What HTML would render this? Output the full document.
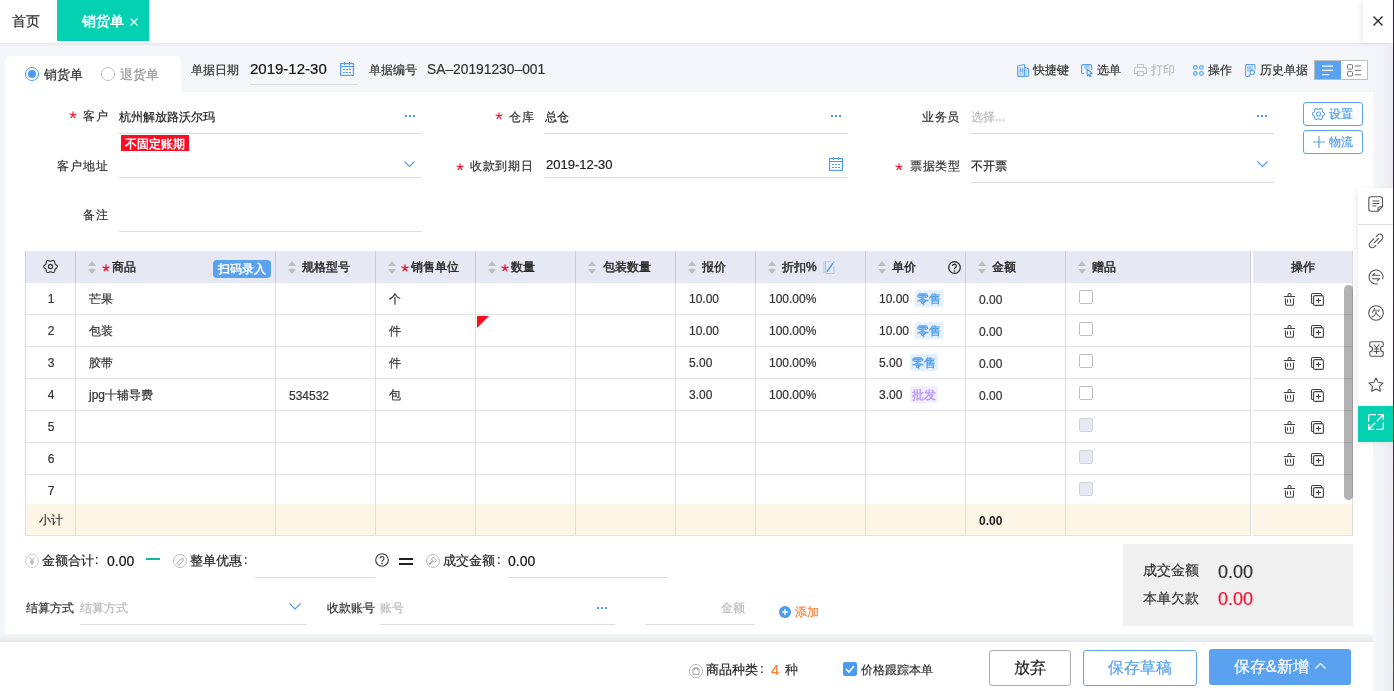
<!DOCTYPE html>
<html><head><meta charset="utf-8">
<style>
*{box-sizing:border-box;margin:0;padding:0}
html,body{width:1394px;height:691px;overflow:hidden;background:#f4f6fa}
body{font-family:"Liberation Sans",sans-serif;font-size:12px;color:#333;position:relative}
.a{-webkit-text-stroke:0.2px currentColor}
.b{-webkit-text-stroke:0}
.hd{-webkit-text-stroke:0.45px currentColor}
.a{position:absolute;white-space:nowrap}
.t12{font-size:12px;line-height:20px}
.t13{font-size:13px;line-height:20px}
.t14{font-size:14px;line-height:20px}
.ul{position:absolute;height:1px;background:#dcdcdc}
.red{color:#f5222d}
.vl{position:absolute;width:1px;background:#dedede}
.hl{position:absolute;height:1px;background:#e2e2e2}
svg{position:absolute;overflow:visible}
</style></head><body><div id="root" style="position:absolute;left:0;top:0;width:1394px;height:691px;overflow:hidden;will-change:transform">

<!-- top bar -->
<div class="a" style="left:0;top:0;width:1394px;height:43px;background:#fff"></div>
<div class="a" style="left:0;top:43px;width:1394px;height:4px;background:linear-gradient(#e6e7ea,#eceef1 40%,#f1f3f6 70%,#f4f6fa)"></div>
<div class="a t14" style="left:12px;top:11px;color:#333">首页</div>
<div class="a" style="left:57px;top:0;width:92px;height:41px;background:#03d1b1"></div>
<div class="a t14" style="left:82px;top:11px;color:#fff;font-weight:bold;-webkit-text-stroke:0">销货单</div>
<svg style="left:130px;top:18px" width="8" height="8"><path d="M0.5 0.5L7.5 7.5M7.5 0.5L0.5 7.5" stroke="#fff" stroke-width="1.2"/></svg>
<div class="a" style="left:1363px;top:0;width:31px;height:43px;background:#fff;box-shadow:-3px 0 5px rgba(0,0,0,0.06)"></div>
<svg style="left:1373px;top:16px" width="10" height="10"><path d="M0.5 0.5L9.5 9.5M9.5 0.5L0.5 9.5" stroke="#222" stroke-width="1.3"/></svg>

<!-- radio tab -->
<div class="a" style="left:5px;top:56px;width:176px;height:40px;background:#fff;border-radius:6px 6px 0 0"></div>
<div class="a" style="left:25px;top:67px;width:14px;height:14px;border:1px solid #4a9af0;border-radius:50%"></div>
<div class="a" style="left:28px;top:70px;width:8px;height:8px;background:#4a9af0;border-radius:50%"></div>
<div class="a" style="left:44px;top:65px;font-size:13px;line-height:20px;color:#333">销货单</div>
<div class="a" style="left:101px;top:67px;width:14px;height:14px;border:1px solid #bbb;border-radius:50%"></div>
<div class="a" style="left:120px;top:65px;font-size:13px;line-height:20px;color:#999">退货单</div>

<!-- toolbar strip -->
<div class="a t12" style="left:191px;top:60px;color:#333">单据日期</div>
<div class="a" style="left:250px;top:59px;font-size:15px;line-height:20px;color:#111">2019-12-30</div>
<div class="ul" style="left:250px;top:84px;width:108px"></div>
<svg style="left:340px;top:62px" width="14" height="14" viewBox="0 0 14 14"><g fill="none" stroke="#4a9af0" stroke-width="1.1"><rect x="0.6" y="1.6" width="12.8" height="11.8"/><path d="M0.6 4.5H13.4M4.5 0V3M9.5 0V3M3 7.5H5M6 7.5H8M9 7.5H11M3 10.5H5M6 10.5H8M9 10.5H11"/></g></svg>
<div class="a t12" style="left:369px;top:60px;color:#333">单据编号</div>
<div class="a" style="left:427px;top:60px;font-size:13.8px;line-height:20px;color:#333">SA–20191230–001</div>

<div class="a t12" style="left:1033px;top:60px;color:#333">快捷键</div>
<div class="a t12" style="left:1097px;top:60px;color:#333">选单</div>
<div class="a t12" style="left:1151px;top:60px;color:#bbb">打印</div>
<div class="a t12" style="left:1208px;top:60px;color:#333">操作</div>
<div class="a t12" style="left:1260px;top:60px;color:#333">历史单据</div>
<!-- toolbar icons -->
<svg style="left:1017px;top:64px" width="12" height="13" viewBox="0 0 12 13"><path d="M1 3V11.5H7.5V3Z" fill="#cfe3fb"/><g fill="none" stroke="#5aa2ef" stroke-width="1.1" stroke-linejoin="round"><path d="M0.6 2.6Q0.6 1.9 1.3 1.7L7.5 0.5V12.4H1.8A1.2 1.2 0 0 1 0.6 11.2Z"/><path d="M7.5 3.2L10.9 4.6A1 1 0 0 1 11.5 5.5V11.2A1.2 1.2 0 0 1 10.3 12.4H7.5"/><path d="M3.3 4.3V8.3M5.3 4.3V8.3M2.8 9.8H3.8M4.8 9.8H5.8M8.7 6H10M8.7 8H10M8.7 10H10"/></g></svg>
<svg style="left:1081px;top:64px" width="12" height="13" viewBox="0 0 12 13"><rect x="3" y="1" width="5.5" height="4.5" fill="#a8cdf5"/><g fill="none" stroke="#5aa2ef" stroke-width="1.2" stroke-linejoin="round"><path d="M3 9.4H2A1.4 1.4 0 0 1 .6 8V2A1.4 1.4 0 0 1 2 .6H9.2A1.4 1.4 0 0 1 10.6 2V6"/><path d="M6 5.2L11.2 9.2L9 9.8L10 12L8.9 12.5L7.9 10.4L6.3 11.8Z"/></g></svg>
<svg style="left:1134px;top:64px" width="13" height="12" viewBox="0 0 13 12"><g fill="none" stroke="#c4c4c4" stroke-width="1.1"><path d="M3.5 3.5V0.5H9.5V3.5M3 9.5H1.5A1 1 0 0 1 .5 8.5V4.5A1 1 0 0 1 1.5 3.5H11.5A1 1 0 0 1 12.5 4.5V8.5A1 1 0 0 1 11.5 9.5H10"/><rect x="3.5" y="7.5" width="6" height="4"/></g></svg>
<svg style="left:1193px;top:65px" width="11" height="11" viewBox="0 0 11 11"><g fill="none" stroke="#5aa2ef" stroke-width="1.2"><rect x="0.6" y="0.6" width="3.6" height="3.6" rx="1.8"/><rect x="6.6" y="0.6" width="3.6" height="3.6" rx="1.8"/><rect x="0.6" y="6.6" width="3.6" height="3.6" rx="1.8"/><rect x="6.6" y="6.6" width="3.6" height="3.6" rx="1.8"/></g></svg>
<svg style="left:1245px;top:64px" width="11" height="13" viewBox="0 0 11 13"><rect x="2" y="2" width="5.8" height="5.5" fill="#a8cdf5"/><g fill="none" stroke="#5aa2ef" stroke-width="1.1"><path d="M4.5 12.4H1.8A1.2 1.2 0 0 1 .6 11.2V1.8A1.2 1.2 0 0 1 1.8 .6H8.8A1.2 1.2 0 0 1 10 1.8V5.5"/><circle cx="7.2" cy="8.3" r="2.2"/><path d="M5.6 9.9L3.8 11.9"/></g></svg>
<div class="a" style="left:1314px;top:60px;width:54px;height:20px;border:1px solid #bdbdbd;background:#fff"></div>
<div class="a" style="left:1315px;top:61px;width:26px;height:18px;background:#5aa2ef"></div>
<svg style="left:1322px;top:65px" width="12" height="11"><path d="M0 1.1H11M0 5.4H11M0 9.7H7.3" stroke="#fff" stroke-width="1.1"/></svg>
<svg style="left:1347px;top:64px" width="15" height="13" viewBox="0 0 15 13"><g fill="none" stroke="#777" stroke-width="1"><rect x="0.5" y="0.6" width="5" height="4.6" rx="0.9"/><rect x="0.5" y="7.4" width="5" height="4.6" rx="0.9"/><path d="M7.8 2H14M7.8 6.4H14M7.8 10.8H14"/></g></svg>

<!-- main panel -->
<div class="a" style="left:5px;top:92px;width:1368px;height:542px;background:#fff"></div>
<div class="a" style="left:1373px;top:46px;width:20px;height:645px;background:linear-gradient(to right,#f4f6fa,#f1f3f6 60%,#e9ebef)"></div>


<!-- form row 1 -->
<svg style="left:69.0px;top:111.2px" width="8" height="8"><path d="M4 4L4.00 0.80M4 4L7.04 3.01M4 4L5.88 6.59M4 4L2.12 6.59M4 4L0.96 3.01" stroke="#ff0a24" stroke-width="1.15" stroke-linecap="round" fill="none"/></svg>
<div class="a t12" style="left:83px;top:106px;color:#333;letter-spacing:1px">客户</div>
<div class="a t12" style="left:119px;top:107px;color:#222">杭州解放路沃尔玛</div>
<div class="ul" style="left:119px;top:133px;width:303px"></div>
<svg style="left:405px;top:115px" width="11" height="3"><path d="M0 0h2v2h-2zM4 0h2v2h-2zM8 0h2v2h-2z" fill="#4a9af0"/></svg>
<div class="a" style="left:121px;top:135px;width:68px;height:16px;background:#fc0d26"></div>
<div class="a t12" style="left:125px;top:134px;color:#fff;font-weight:bold;-webkit-text-stroke:0">不固定账期</div>

<svg style="left:495.0px;top:112.0px" width="8" height="8"><path d="M4 4L4.00 0.80M4 4L7.04 3.01M4 4L5.88 6.59M4 4L2.12 6.59M4 4L0.96 3.01" stroke="#ff0a24" stroke-width="1.15" stroke-linecap="round" fill="none"/></svg>
<div class="a t12" style="left:509px;top:107px;color:#333;letter-spacing:0.5px">仓库</div>
<div class="a t12" style="left:545px;top:107px;color:#222">总仓</div>
<div class="ul" style="left:545px;top:133px;width:303px"></div>
<svg style="left:831px;top:115px" width="11" height="3"><path d="M0 0h2v2h-2zM4 0h2v2h-2zM8 0h2v2h-2z" fill="#4a9af0"/></svg>

<div class="a t12" style="left:922px;top:107px;color:#333;letter-spacing:0.5px">业务员</div>
<div class="a t12" style="left:971px;top:107px;color:#bbb">选择...</div>
<div class="ul" style="left:971px;top:133px;width:303px"></div>
<svg style="left:1257px;top:115px" width="11" height="3"><path d="M0 0h2v2h-2zM4 0h2v2h-2zM8 0h2v2h-2z" fill="#4a9af0"/></svg>

<div class="a" style="left:1303px;top:102px;width:60px;height:24px;border:1px solid #5aa2ef;border-radius:3px"></div>
<svg style="left:1312px;top:108px" width="13" height="12" viewBox="0 0 13 12"><g fill="none" stroke="#5aa2ef" stroke-width="1.1"><path d="M12.55 6.00L12.51 6.31L12.39 6.62L12.21 6.90L11.98 7.16L11.72 7.40L11.44 7.61L11.18 7.80L10.95 7.98L10.76 8.17L10.61 8.38L10.51 8.60L10.44 8.86L10.40 9.16L10.36 9.48L10.32 9.82L10.25 10.16L10.14 10.49L9.98 10.79L9.78 11.05L9.53 11.24L9.23 11.36L8.91 11.41L8.57 11.40L8.23 11.33L7.90 11.22L7.58 11.09L7.28 10.96L7.01 10.85L6.75 10.78L6.50 10.75L6.25 10.78L5.99 10.85L5.72 10.96L5.42 11.09L5.10 11.22L4.77 11.33L4.43 11.40L4.09 11.41L3.77 11.36L3.48 11.24L3.22 11.05L3.02 10.79L2.86 10.49L2.75 10.16L2.68 9.82L2.64 9.48L2.60 9.16L2.56 8.86L2.49 8.60L2.39 8.38L2.24 8.17L2.05 7.98L1.82 7.80L1.56 7.61L1.28 7.40L1.02 7.16L0.79 6.90L0.61 6.62L0.49 6.31L0.45 6.00L0.49 5.69L0.61 5.38L0.79 5.10L1.02 4.84L1.28 4.60L1.56 4.39L1.82 4.20L2.05 4.02L2.24 3.83L2.39 3.63L2.49 3.40L2.56 3.14L2.60 2.84L2.64 2.52L2.68 2.18L2.75 1.84L2.86 1.51L3.02 1.21L3.22 0.95L3.47 0.76L3.77 0.64L4.09 0.59L4.43 0.60L4.77 0.67L5.10 0.78L5.42 0.91L5.72 1.04L5.99 1.15L6.25 1.22L6.50 1.25L6.75 1.22L7.01 1.15L7.28 1.04L7.58 0.91L7.90 0.78L8.23 0.67L8.57 0.60L8.91 0.59L9.23 0.64L9.53 0.76L9.78 0.95L9.98 1.21L10.14 1.51L10.25 1.84L10.32 2.18L10.36 2.52L10.40 2.84L10.44 3.14L10.51 3.40L10.61 3.63L10.76 3.83L10.95 4.02L11.18 4.20L11.44 4.39L11.72 4.60L11.98 4.84L12.21 5.10L12.39 5.38L12.51 5.69L12.55 6.00Z"/><circle cx="6.5" cy="6" r="2"/></g></svg>
<div class="a t12" style="left:1329px;top:104px;color:#4a9af0">设置</div>
<div class="a" style="left:1303px;top:130px;width:60px;height:24px;border:1px solid #5aa2ef;border-radius:3px"></div>
<svg style="left:1313px;top:136px" width="12" height="12"><path d="M6 0V12M0 6H12" stroke="#5aa2ef" stroke-width="1.2"/></svg>
<div class="a t12" style="left:1329px;top:132px;color:#4a9af0">物流</div>

<!-- form row 2 -->
<div class="a t12" style="left:57px;top:156px;color:#333;letter-spacing:1px">客户地址</div>
<div class="ul" style="left:119px;top:177px;width:303px"></div>
<svg style="left:404px;top:161px" width="11" height="6"><path d="M0.5 0.5L5.5 5.5L10.5 0.5" fill="none" stroke="#4a9af0" stroke-width="1.1"/></svg>

<svg style="left:456.0px;top:162.8px" width="8" height="8"><path d="M4 4L4.00 0.80M4 4L7.04 3.01M4 4L5.88 6.59M4 4L2.12 6.59M4 4L0.96 3.01" stroke="#ff0a24" stroke-width="1.15" stroke-linecap="round" fill="none"/></svg>
<div class="a t12" style="left:470px;top:156px;color:#333;letter-spacing:0.7px">收款到期日</div>
<div class="a t13" style="left:546px;top:155px;color:#222">2019-12-30</div>
<div class="ul" style="left:545px;top:177px;width:303px"></div>
<svg style="left:829px;top:157px" width="14" height="14" viewBox="0 0 14 14"><g fill="none" stroke="#4a9af0" stroke-width="1.1"><rect x="0.6" y="1.6" width="12.8" height="11.8"/><path d="M0.6 4.5H13.4M4.5 0V3M9.5 0V3M3 7.5H5M6 7.5H8M9 7.5H11M3 10.5H5M6 10.5H8M9 10.5H11"/></g></svg>

<svg style="left:895.0px;top:162.8px" width="8" height="8"><path d="M4 4L4.00 0.80M4 4L7.04 3.01M4 4L5.88 6.59M4 4L2.12 6.59M4 4L0.96 3.01" stroke="#ff0a24" stroke-width="1.15" stroke-linecap="round" fill="none"/></svg>
<div class="a t12" style="left:910px;top:156px;color:#333;letter-spacing:0.7px">票据类型</div>
<div class="a t12" style="left:971px;top:156px;color:#222">不开票</div>
<div class="ul" style="left:971px;top:182px;width:303px"></div>
<svg style="left:1257px;top:161px" width="11" height="7"><path d="M0.5 0.5L5.5 5.5L10.5 0.5" fill="none" stroke="#4a9af0" stroke-width="1.1"/></svg>

<!-- row 3 -->
<div class="a t12" style="left:83px;top:205px;color:#333;letter-spacing:1px">备注</div>
<div class="ul" style="left:119px;top:231px;width:303px"></div>

<!-- TABLE -->
<div class="a" style="left:25px;top:251px;width:1328px;height:32px;background:#e6e9f4"></div>
<div class="a" style="left:25px;top:504px;width:1328px;height:31px;background:#fdf5e6"></div>
<div class="hl" style="left:25px;top:314px;width:1328px"></div>
<div class="hl" style="left:25px;top:346px;width:1328px"></div>
<div class="hl" style="left:25px;top:378px;width:1328px"></div>
<div class="hl" style="left:25px;top:410px;width:1328px"></div>
<div class="hl" style="left:25px;top:442px;width:1328px"></div>
<div class="hl" style="left:25px;top:474px;width:1328px"></div>
<div class="hl" style="left:25px;top:535px;width:1328px"></div>
<div class="vl" style="left:25px;top:251px;height:32px;background:#c9ccd3"></div>
<div class="vl" style="left:25px;top:283px;height:253px"></div>
<div class="vl" style="left:75px;top:251px;height:32px;background:#c9ccd3"></div>
<div class="vl" style="left:75px;top:283px;height:253px"></div>
<div class="vl" style="left:275px;top:251px;height:32px;background:#c9ccd3"></div>
<div class="vl" style="left:275px;top:283px;height:253px"></div>
<div class="vl" style="left:375px;top:251px;height:32px;background:#c9ccd3"></div>
<div class="vl" style="left:375px;top:283px;height:253px"></div>
<div class="vl" style="left:475px;top:251px;height:32px;background:#c9ccd3"></div>
<div class="vl" style="left:475px;top:283px;height:253px"></div>
<div class="vl" style="left:575px;top:251px;height:32px;background:#c9ccd3"></div>
<div class="vl" style="left:575px;top:283px;height:253px"></div>
<div class="vl" style="left:675px;top:251px;height:32px;background:#c9ccd3"></div>
<div class="vl" style="left:675px;top:283px;height:253px"></div>
<div class="vl" style="left:755px;top:251px;height:32px;background:#c9ccd3"></div>
<div class="vl" style="left:755px;top:283px;height:253px"></div>
<div class="vl" style="left:865px;top:251px;height:32px;background:#c9ccd3"></div>
<div class="vl" style="left:865px;top:283px;height:253px"></div>
<div class="vl" style="left:965px;top:251px;height:32px;background:#c9ccd3"></div>
<div class="vl" style="left:965px;top:283px;height:253px"></div>
<div class="vl" style="left:1065px;top:251px;height:32px;background:#c9ccd3"></div>
<div class="vl" style="left:1065px;top:283px;height:253px"></div>
<div class="vl" style="left:1250px;top:251px;height:32px;background:#c9ccd3"></div>
<div class="vl" style="left:1250px;top:283px;height:253px"></div>
<div class="a" style="left:1251px;top:251px;width:2px;height:285px;background:#fff"></div>
<div class="vl" style="left:1352px;top:251px;height:285px"></div>
<div class="a" style="left:1253px;top:251px;width:99px;height:32px;background:#e6e9f4"></div>
<svg style="left:43px;top:259px" width="15" height="15" viewBox="0 0 15 15"><g fill="none" stroke="#333" stroke-width="1.15"><path d="M14.25 7.50L14.20 7.85L14.07 8.19L13.86 8.51L13.60 8.80L13.30 9.05L12.99 9.28L12.69 9.49L12.43 9.69L12.21 9.90L12.05 10.12L11.93 10.38L11.86 10.67L11.82 11.00L11.79 11.36L11.74 11.74L11.67 12.13L11.55 12.51L11.38 12.84L11.16 13.13L10.88 13.35L10.55 13.48L10.19 13.54L9.81 13.51L9.43 13.43L9.05 13.30L8.70 13.14L8.37 12.99L8.06 12.86L7.78 12.78L7.50 12.75L7.22 12.78L6.94 12.86L6.63 12.99L6.30 13.14L5.95 13.30L5.57 13.43L5.19 13.51L4.81 13.54L4.45 13.48L4.13 13.35L3.84 13.13L3.62 12.84L3.45 12.51L3.33 12.13L3.26 11.74L3.21 11.36L3.18 11.00L3.14 10.67L3.07 10.38L2.95 10.12L2.79 9.90L2.57 9.69L2.31 9.49L2.01 9.28L1.70 9.05L1.40 8.80L1.14 8.51L0.93 8.19L0.80 7.85L0.75 7.50L0.80 7.15L0.93 6.81L1.14 6.49L1.40 6.20L1.70 5.95L2.01 5.72L2.31 5.51L2.57 5.31L2.79 5.10L2.95 4.88L3.07 4.62L3.14 4.33L3.18 4.00L3.21 3.64L3.26 3.26L3.33 2.87L3.45 2.49L3.62 2.16L3.84 1.87L4.12 1.65L4.45 1.52L4.81 1.46L5.19 1.49L5.57 1.57L5.95 1.70L6.30 1.86L6.63 2.01L6.94 2.14L7.22 2.22L7.50 2.25L7.78 2.22L8.06 2.14L8.37 2.01L8.70 1.86L9.05 1.70L9.43 1.57L9.81 1.49L10.19 1.46L10.55 1.52L10.88 1.65L11.16 1.87L11.38 2.16L11.55 2.49L11.67 2.87L11.74 3.26L11.79 3.64L11.82 4.00L11.86 4.33L11.93 4.62L12.05 4.88L12.21 5.10L12.43 5.31L12.69 5.51L12.99 5.72L13.30 5.95L13.60 6.20L13.86 6.49L14.07 6.81L14.20 7.15L14.25 7.50Z"/><circle cx="7.5" cy="7.5" r="2.1"/></g></svg>
<svg style="left:88px;top:261px" width="8" height="13" viewBox="0 0 8 13"><path d="M4 0L8 5H0Z M0 8H8L4 13Z" fill="#bdbdbd"/></svg><svg style="left:101.5px;top:264.2px" width="8" height="8"><path d="M4 4L4.00 0.80M4 4L7.04 3.01M4 4L5.88 6.59M4 4L2.12 6.59M4 4L0.96 3.01" stroke="#ff0a24" stroke-width="1.3" stroke-linecap="round" fill="none"/></svg><div class="a t12 hd" style="left:112px;top:257px;color:#2a2a2a">商品</div>
<div class="a" style="left:213px;top:260px;width:58px;height:18px;background:#5aa2ef;border-radius:4px"></div>
<div class="a t12" style="left:218px;top:259px;color:#fff;font-weight:bold;-webkit-text-stroke:0">扫码录入</div>
<svg style="left:288px;top:261px" width="8" height="13" viewBox="0 0 8 13"><path d="M4 0L8 5H0Z M0 8H8L4 13Z" fill="#bdbdbd"/></svg><div class="a t12 hd" style="left:302px;top:257px;color:#2a2a2a">规格型号</div>
<svg style="left:388px;top:261px" width="8" height="13" viewBox="0 0 8 13"><path d="M4 0L8 5H0Z M0 8H8L4 13Z" fill="#bdbdbd"/></svg><svg style="left:400.5px;top:264.2px" width="8" height="8"><path d="M4 4L4.00 0.80M4 4L7.04 3.01M4 4L5.88 6.59M4 4L2.12 6.59M4 4L0.96 3.01" stroke="#ff0a24" stroke-width="1.3" stroke-linecap="round" fill="none"/></svg><div class="a t12 hd" style="left:411px;top:257px;color:#2a2a2a">销售单位</div>
<svg style="left:488px;top:261px" width="8" height="13" viewBox="0 0 8 13"><path d="M4 0L8 5H0Z M0 8H8L4 13Z" fill="#bdbdbd"/></svg><svg style="left:500.5px;top:264.2px" width="8" height="8"><path d="M4 4L4.00 0.80M4 4L7.04 3.01M4 4L5.88 6.59M4 4L2.12 6.59M4 4L0.96 3.01" stroke="#ff0a24" stroke-width="1.3" stroke-linecap="round" fill="none"/></svg><div class="a t12 hd" style="left:511px;top:257px;color:#2a2a2a">数量</div>
<svg style="left:588px;top:261px" width="8" height="13" viewBox="0 0 8 13"><path d="M4 0L8 5H0Z M0 8H8L4 13Z" fill="#bdbdbd"/></svg><div class="a t12 hd" style="left:603px;top:257px;color:#2a2a2a">包装数量</div>
<svg style="left:688px;top:261px" width="8" height="13" viewBox="0 0 8 13"><path d="M4 0L8 5H0Z M0 8H8L4 13Z" fill="#bdbdbd"/></svg><div class="a t12 hd" style="left:702px;top:257px;color:#2a2a2a">报价</div>
<svg style="left:768px;top:261px" width="8" height="13" viewBox="0 0 8 13"><path d="M4 0L8 5H0Z M0 8H8L4 13Z" fill="#bdbdbd"/></svg><div class="a t12 hd" style="left:782px;top:257px;color:#2a2a2a">折扣%</div>
<svg style="left:823px;top:261px" width="12" height="13" viewBox="0 0 12 13"><g fill="none" stroke-linecap="round"><path d="M0.8 11.5V1.8A1.2 1.2 0 0 1 2 .7H7.5" stroke="#b3d3f7" stroke-width="1.3"/><path d="M2.4 1.6V11.3A1.2 1.2 0 0 0 3.6 12.5H9.8A1.2 1.2 0 0 0 11 11.3V5.5" stroke="#9cc8f5" stroke-width="1.1"/><path d="M4.2 10.2L9.6 2.6" stroke="#4a9af0" stroke-width="1.5"/><path d="M10.4 1.3L11 .8" stroke="#7fb8f3" stroke-width="1.2"/></g></svg>
<svg style="left:878px;top:261px" width="8" height="13" viewBox="0 0 8 13"><path d="M4 0L8 5H0Z M0 8H8L4 13Z" fill="#bdbdbd"/></svg><div class="a t12 hd" style="left:892px;top:257px;color:#2a2a2a">单价</div>
<svg style="left:948px;top:261px" width="13" height="13" viewBox="0 0 13 13"><circle cx="6.5" cy="6.5" r="5.8" fill="none" stroke="#222" stroke-width="1.2"/><path d="M4.6 5A1.9 1.9 0 1 1 7.2 6.8C6.6 7.1 6.5 7.5 6.5 8.2" fill="none" stroke="#222" stroke-width="1.2"/><circle cx="6.5" cy="10" r="0.8" fill="#222"/></svg>
<svg style="left:978px;top:261px" width="8" height="13" viewBox="0 0 8 13"><path d="M4 0L8 5H0Z M0 8H8L4 13Z" fill="#bdbdbd"/></svg><div class="a t12 hd" style="left:992px;top:257px;color:#2a2a2a">金额</div>
<svg style="left:1078px;top:261px" width="8" height="13" viewBox="0 0 8 13"><path d="M4 0L8 5H0Z M0 8H8L4 13Z" fill="#bdbdbd"/></svg><div class="a t12 hd" style="left:1092px;top:257px;color:#2a2a2a">赠品</div>
<div class="a t12 hd" style="left:1291px;top:257px;color:#2a2a2a">操作</div>
<div class="a t12" style="left:26px;width:50px;text-align:center;top:289px;color:#333">1</div>
<div class="a t12" style="left:89px;top:289px;color:#333">芒果</div>
<div class="a t12" style="left:389px;top:289px;color:#333">个</div>
<div class="a t12" style="left:689px;top:289px;color:#333">10.00</div>
<div class="a t12" style="left:769px;top:289px;color:#333">100.00%</div>
<div class="a t12" style="left:879px;top:289px;color:#333">10.00</div>
<div class="a" style="left:915px;top:290px;width:28px;height:17px;background:#e5f0fd;border-radius:2px"></div>
<div class="a t12" style="left:917px;top:289px;color:#55a0ef;font-weight:bold;-webkit-text-stroke:0">零售</div>
<div class="a t12" style="left:979px;top:290px;color:#333">0.00</div>
<div class="a" style="left:1079px;top:290px;width:14px;height:14px;border:1px solid #bdbdbd;border-radius:2px;background:#fff"></div>
<svg style="left:1284px;top:293px" width="11" height="13" viewBox="0 0 11 13"><g fill="none" stroke="#444" stroke-width="1.1"><path d="M0 3.5H11M4 3.5V2A1.5 1.5 0 0 1 7 2V3.5M1.5 5.5V10.5A1.8 1.8 0 0 0 3.3 12.3H7.7A1.8 1.8 0 0 0 9.5 10.5V5.5M3.5 6.3V9.7M6.5 6.3V9.7"/></g></svg>
<svg style="left:1311px;top:293px" width="13" height="13" viewBox="0 0 13 13"><g fill="none" stroke="#444" stroke-width="1.1"><path d="M2.5 10.5H1.8A1.3 1.3 0 0 1 .5 9.2V1.8A1.3 1.3 0 0 1 1.8 .5H9.2A1.3 1.3 0 0 1 10.5 1.8V2.5"/><rect x="2.6" y="2.6" width="9.8" height="9.8" rx="1.5"/><path d="M5 7.5H10M7.5 5V10"/></g></svg>
<div class="a t12" style="left:26px;width:50px;text-align:center;top:321px;color:#333">2</div>
<div class="a t12" style="left:89px;top:321px;color:#333">包装</div>
<div class="a t12" style="left:389px;top:321px;color:#333">件</div>
<div class="a t12" style="left:689px;top:321px;color:#333">10.00</div>
<div class="a t12" style="left:769px;top:321px;color:#333">100.00%</div>
<div class="a t12" style="left:879px;top:321px;color:#333">10.00</div>
<div class="a" style="left:915px;top:322px;width:28px;height:17px;background:#e5f0fd;border-radius:2px"></div>
<div class="a t12" style="left:917px;top:321px;color:#55a0ef;font-weight:bold;-webkit-text-stroke:0">零售</div>
<div class="a t12" style="left:979px;top:322px;color:#333">0.00</div>
<div class="a" style="left:1079px;top:322px;width:14px;height:14px;border:1px solid #bdbdbd;border-radius:2px;background:#fff"></div>
<svg style="left:1284px;top:325px" width="11" height="13" viewBox="0 0 11 13"><g fill="none" stroke="#444" stroke-width="1.1"><path d="M0 3.5H11M4 3.5V2A1.5 1.5 0 0 1 7 2V3.5M1.5 5.5V10.5A1.8 1.8 0 0 0 3.3 12.3H7.7A1.8 1.8 0 0 0 9.5 10.5V5.5M3.5 6.3V9.7M6.5 6.3V9.7"/></g></svg>
<svg style="left:1311px;top:325px" width="13" height="13" viewBox="0 0 13 13"><g fill="none" stroke="#444" stroke-width="1.1"><path d="M2.5 10.5H1.8A1.3 1.3 0 0 1 .5 9.2V1.8A1.3 1.3 0 0 1 1.8 .5H9.2A1.3 1.3 0 0 1 10.5 1.8V2.5"/><rect x="2.6" y="2.6" width="9.8" height="9.8" rx="1.5"/><path d="M5 7.5H10M7.5 5V10"/></g></svg>
<div class="a t12" style="left:26px;width:50px;text-align:center;top:353px;color:#333">3</div>
<div class="a t12" style="left:89px;top:353px;color:#333">胶带</div>
<div class="a t12" style="left:389px;top:353px;color:#333">件</div>
<div class="a t12" style="left:689px;top:353px;color:#333">5.00</div>
<div class="a t12" style="left:769px;top:353px;color:#333">100.00%</div>
<div class="a t12" style="left:879px;top:353px;color:#333">5.00</div>
<div class="a" style="left:910px;top:354px;width:28px;height:17px;background:#e5f0fd;border-radius:2px"></div>
<div class="a t12" style="left:912px;top:353px;color:#55a0ef;font-weight:bold;-webkit-text-stroke:0">零售</div>
<div class="a t12" style="left:979px;top:354px;color:#333">0.00</div>
<div class="a" style="left:1079px;top:354px;width:14px;height:14px;border:1px solid #bdbdbd;border-radius:2px;background:#fff"></div>
<svg style="left:1284px;top:357px" width="11" height="13" viewBox="0 0 11 13"><g fill="none" stroke="#444" stroke-width="1.1"><path d="M0 3.5H11M4 3.5V2A1.5 1.5 0 0 1 7 2V3.5M1.5 5.5V10.5A1.8 1.8 0 0 0 3.3 12.3H7.7A1.8 1.8 0 0 0 9.5 10.5V5.5M3.5 6.3V9.7M6.5 6.3V9.7"/></g></svg>
<svg style="left:1311px;top:357px" width="13" height="13" viewBox="0 0 13 13"><g fill="none" stroke="#444" stroke-width="1.1"><path d="M2.5 10.5H1.8A1.3 1.3 0 0 1 .5 9.2V1.8A1.3 1.3 0 0 1 1.8 .5H9.2A1.3 1.3 0 0 1 10.5 1.8V2.5"/><rect x="2.6" y="2.6" width="9.8" height="9.8" rx="1.5"/><path d="M5 7.5H10M7.5 5V10"/></g></svg>
<div class="a t12" style="left:26px;width:50px;text-align:center;top:385px;color:#333">4</div>
<div class="a t12" style="left:89px;top:385px;color:#333">jpg十辅导费</div>
<div class="a t12" style="left:289px;top:386px;color:#333">534532</div>
<div class="a t12" style="left:389px;top:385px;color:#333">包</div>
<div class="a t12" style="left:689px;top:385px;color:#333">3.00</div>
<div class="a t12" style="left:769px;top:385px;color:#333">100.00%</div>
<div class="a t12" style="left:879px;top:385px;color:#333">3.00</div>
<div class="a" style="left:910px;top:386px;width:28px;height:17px;background:#f3efff;border-radius:2px"></div>
<div class="a t12" style="left:912px;top:385px;color:#b99cf2;font-weight:bold;-webkit-text-stroke:0">批发</div>
<div class="a t12" style="left:979px;top:386px;color:#333">0.00</div>
<div class="a" style="left:1079px;top:386px;width:14px;height:14px;border:1px solid #bdbdbd;border-radius:2px;background:#fff"></div>
<svg style="left:1284px;top:389px" width="11" height="13" viewBox="0 0 11 13"><g fill="none" stroke="#444" stroke-width="1.1"><path d="M0 3.5H11M4 3.5V2A1.5 1.5 0 0 1 7 2V3.5M1.5 5.5V10.5A1.8 1.8 0 0 0 3.3 12.3H7.7A1.8 1.8 0 0 0 9.5 10.5V5.5M3.5 6.3V9.7M6.5 6.3V9.7"/></g></svg>
<svg style="left:1311px;top:389px" width="13" height="13" viewBox="0 0 13 13"><g fill="none" stroke="#444" stroke-width="1.1"><path d="M2.5 10.5H1.8A1.3 1.3 0 0 1 .5 9.2V1.8A1.3 1.3 0 0 1 1.8 .5H9.2A1.3 1.3 0 0 1 10.5 1.8V2.5"/><rect x="2.6" y="2.6" width="9.8" height="9.8" rx="1.5"/><path d="M5 7.5H10M7.5 5V10"/></g></svg>
<div class="a t12" style="left:26px;width:50px;text-align:center;top:417px;color:#333">5</div>
<div class="a" style="left:1079px;top:418px;width:14px;height:14px;border:1px solid #cfd3dc;border-radius:2px;background:#e6e9f4"></div>
<svg style="left:1284px;top:421px" width="11" height="13" viewBox="0 0 11 13"><g fill="none" stroke="#444" stroke-width="1.1"><path d="M0 3.5H11M4 3.5V2A1.5 1.5 0 0 1 7 2V3.5M1.5 5.5V10.5A1.8 1.8 0 0 0 3.3 12.3H7.7A1.8 1.8 0 0 0 9.5 10.5V5.5M3.5 6.3V9.7M6.5 6.3V9.7"/></g></svg>
<svg style="left:1311px;top:421px" width="13" height="13" viewBox="0 0 13 13"><g fill="none" stroke="#444" stroke-width="1.1"><path d="M2.5 10.5H1.8A1.3 1.3 0 0 1 .5 9.2V1.8A1.3 1.3 0 0 1 1.8 .5H9.2A1.3 1.3 0 0 1 10.5 1.8V2.5"/><rect x="2.6" y="2.6" width="9.8" height="9.8" rx="1.5"/><path d="M5 7.5H10M7.5 5V10"/></g></svg>
<div class="a t12" style="left:26px;width:50px;text-align:center;top:449px;color:#333">6</div>
<div class="a" style="left:1079px;top:450px;width:14px;height:14px;border:1px solid #cfd3dc;border-radius:2px;background:#e6e9f4"></div>
<svg style="left:1284px;top:453px" width="11" height="13" viewBox="0 0 11 13"><g fill="none" stroke="#444" stroke-width="1.1"><path d="M0 3.5H11M4 3.5V2A1.5 1.5 0 0 1 7 2V3.5M1.5 5.5V10.5A1.8 1.8 0 0 0 3.3 12.3H7.7A1.8 1.8 0 0 0 9.5 10.5V5.5M3.5 6.3V9.7M6.5 6.3V9.7"/></g></svg>
<svg style="left:1311px;top:453px" width="13" height="13" viewBox="0 0 13 13"><g fill="none" stroke="#444" stroke-width="1.1"><path d="M2.5 10.5H1.8A1.3 1.3 0 0 1 .5 9.2V1.8A1.3 1.3 0 0 1 1.8 .5H9.2A1.3 1.3 0 0 1 10.5 1.8V2.5"/><rect x="2.6" y="2.6" width="9.8" height="9.8" rx="1.5"/><path d="M5 7.5H10M7.5 5V10"/></g></svg>
<div class="a t12" style="left:26px;width:50px;text-align:center;top:481px;color:#333">7</div>
<div class="a" style="left:1079px;top:482px;width:14px;height:14px;border:1px solid #cfd3dc;border-radius:2px;background:#e6e9f4"></div>
<svg style="left:1284px;top:485px" width="11" height="13" viewBox="0 0 11 13"><g fill="none" stroke="#444" stroke-width="1.1"><path d="M0 3.5H11M4 3.5V2A1.5 1.5 0 0 1 7 2V3.5M1.5 5.5V10.5A1.8 1.8 0 0 0 3.3 12.3H7.7A1.8 1.8 0 0 0 9.5 10.5V5.5M3.5 6.3V9.7M6.5 6.3V9.7"/></g></svg>
<svg style="left:1311px;top:485px" width="13" height="13" viewBox="0 0 13 13"><g fill="none" stroke="#444" stroke-width="1.1"><path d="M2.5 10.5H1.8A1.3 1.3 0 0 1 .5 9.2V1.8A1.3 1.3 0 0 1 1.8 .5H9.2A1.3 1.3 0 0 1 10.5 1.8V2.5"/><rect x="2.6" y="2.6" width="9.8" height="9.8" rx="1.5"/><path d="M5 7.5H10M7.5 5V10"/></g></svg>
<svg style="left:477px;top:316px" width="12" height="12"><path d="M0 0H12L0 12Z" fill="#ff0a1e"/></svg>
<div class="a t12" style="left:26px;width:50px;text-align:center;top:510px;color:#333">小计</div>
<div class="a t12" style="left:979px;top:511px;color:#222;font-weight:bold;-webkit-text-stroke:0">0.00</div>
<div class="a" style="left:1344px;top:285px;width:9px;height:215px;background:rgba(0,0,0,0.3);border-radius:4.5px"></div><svg style="left:25px;top:554px" width="14" height="14" viewBox="0 0 14 14"><circle cx="7" cy="7" r="6.5" fill="none" stroke="#c8c8c8" stroke-width="0.9"/><path d="M4.8 3.6L7 6.4L9.2 3.6M7 6.4V10.8M5 7.3H9M5 9H9" fill="none" stroke="#999" stroke-width="0.8"/></svg>
<div class="a t13" style="left:42px;top:551px;color:#222">金额合计</div><div class="a t13" style="left:95px;top:550px;color:#222">:</div>
<div class="a t14" style="left:107px;top:551px;color:#111">0.00</div>
<div class="a" style="left:146px;top:558px;width:14px;height:2px;background:#10b8a8"></div>
<svg style="left:173px;top:554px" width="14" height="14" viewBox="0 0 14 14"><circle cx="7" cy="7" r="6.5" fill="none" stroke="#b4b4b4" stroke-width="0.9"/><path d="M4.1 8.7L7.9 4.9Q8.3 4.5 8.9 4.5H9.7Q10.4 4.5 10.4 5.2V6Q10.4 6.6 10 7L6.2 10.8Q5.6 11.4 5 10.8L4.1 9.9Q3.5 9.3 4.1 8.7Z" fill="none" stroke="#999" stroke-width="0.85"/><circle cx="8.9" cy="6" r="0.5" fill="#999"/></svg>
<div class="a t13" style="left:190px;top:551px;color:#222">整单优惠</div><div class="a t13" style="left:244px;top:550px;color:#222">:</div>
<div class="ul" style="left:255px;top:577px;width:120px"></div>
<svg style="left:375px;top:553px" width="14" height="14" viewBox="0 0 14 14"><circle cx="7" cy="7" r="6.3" fill="none" stroke="#333" stroke-width="1.1"/><path d="M5 5.6A2 2 0 1 1 7.8 7.4C7.1 7.7 7 8.1 7 8.8" fill="none" stroke="#333" stroke-width="1.1"/><circle cx="7" cy="10.6" r="0.8" fill="#333"/></svg>
<div class="a" style="left:399px;top:558px;width:14px;height:2px;background:#222"></div>
<div class="a" style="left:399px;top:563px;width:14px;height:2px;background:#222"></div>
<svg style="left:426px;top:554px" width="14" height="14" viewBox="0 0 14 14"><circle cx="7" cy="7" r="6.5" fill="none" stroke="#b4b4b4" stroke-width="0.9"/><path d="M5.3 5L7.3 3L10.6 6.3L8.6 8.3Z" fill="none" stroke="#999" stroke-width="0.85"/><path d="M6.6 7.2L3.4 10.4" stroke="#999" stroke-width="1.6"/><path d="M6.6 7.2L3.4 10.4" stroke="#fff" stroke-width="0.5" stroke-dasharray="0.8 0.8"/></svg>
<div class="a t13" style="left:443px;top:551px;color:#222">成交金额</div><div class="a t13" style="left:497px;top:550px;color:#222">:</div>
<div class="a t14" style="left:508px;top:551px;color:#111">0.00</div>
<div class="ul" style="left:508px;top:577px;width:160px"></div>
<div class="a t12" style="left:26px;top:598px;color:#333">结算方式</div>
<div class="a t12" style="left:80px;top:598px;color:#bbb">结算方式</div>
<div class="ul" style="left:80px;top:624px;width:227px"></div>
<svg style="left:289px;top:603px" width="12" height="7"><path d="M0.5 0.5L6 6L11.5 0.5" fill="none" stroke="#4a9af0" stroke-width="1.1"/></svg>
<div class="a t12" style="left:327px;top:598px;color:#333">收款账号</div>
<div class="a t12" style="left:380px;top:598px;color:#bbb">账号</div>
<div class="ul" style="left:380px;top:624px;width:235px"></div>
<svg style="left:597px;top:607px" width="11" height="3"><path d="M0 0h2v2h-2zM4 0h2v2h-2zM8 0h2v2h-2z" fill="#4a9af0"/></svg>
<div class="a t12" style="left:721px;top:598px;color:#bbb">金额</div>
<div class="ul" style="left:645px;top:624px;width:110px"></div>
<svg style="left:779px;top:606px" width="12" height="12" viewBox="0 0 12 12"><circle cx="6" cy="6" r="6" fill="#4a9af0"/><path d="M6 3V9M3 6H9" stroke="#fff" stroke-width="1.3"/></svg>
<div class="a t12" style="left:795px;top:602px;color:#f5813b">添加</div>
<div class="a" style="left:1123px;top:544px;width:230px;height:82px;background:#f0f0f1"></div>
<div class="a" style="left:1143px;top:561px;font-size:13.5px;line-height:20px;color:#333">成交金额</div>
<div class="a" style="left:1218px;top:561px;font-size:18px;line-height:22px;color:#333">0.00</div>
<div class="a" style="left:1143px;top:589px;font-size:13.5px;line-height:20px;color:#333">本单欠款</div>
<div class="a" style="left:1218px;top:588px;font-size:18px;line-height:22px;color:#f5102d">0.00</div>
<div class="a" style="left:0;top:634px;width:1373px;height:8px;background:linear-gradient(#f4f6fa,#e7e8ec)"></div>
<div class="a" style="left:0;top:642px;width:1373px;height:49px;background:#fff"></div>
<svg style="left:689px;top:664px" width="14" height="14" viewBox="0 0 14 14"><circle cx="7" cy="7" r="6.6" fill="none" stroke="#b4b4b4" stroke-width="0.9"/><path d="M4 4.6H10V10.5H4Z" fill="none" stroke="#999" stroke-width="0.85"/><path d="M5.3 6.2V4.5L7 3L8.7 4.5V6.2" fill="none" stroke="#999" stroke-width="0.85"/></svg>
<div class="a t13" style="left:706px;top:660px;color:#222">商品种类</div><div class="a t13" style="left:760px;top:659px;color:#222">:</div>
<div class="a" style="left:771px;top:660px;font-size:15px;line-height:20px;color:#f5813b">4</div>
<div class="a t13" style="left:785px;top:660px;color:#333">种</div>
<div class="a" style="left:843px;top:662px;width:14px;height:14px;background:#4a9af0;border-radius:2px"></div>
<svg style="left:845px;top:665px" width="10" height="8"><path d="M1 4L4 7L9 1" fill="none" stroke="#fff" stroke-width="1.6"/></svg>
<div class="a t12" style="left:861px;top:660px;color:#333">价格跟踪本单</div>
<div class="a" style="left:989px;top:650px;width:82px;height:36px;border:1px solid #a9a9a9;border-radius:3px;background:#fff"></div>
<div class="a" style="left:989px;top:657px;width:82px;text-align:center;font-size:16px;line-height:22px;color:#222">放弃</div>
<div class="a" style="left:1083px;top:650px;width:114px;height:36px;border:1px solid #5aa2ef;border-radius:3px;background:#fff"></div>
<div class="a" style="left:1083px;top:657px;width:114px;text-align:center;font-size:16px;line-height:22px;color:#5aa2ef">保存草稿</div>
<div class="a" style="left:1209px;top:649px;width:142px;height:36px;border-radius:3px;background:#5aa2ef"></div>
<div class="a" style="left:1234px;top:656px;font-size:16px;line-height:22px;color:#fff">保存&amp;新增</div>
<svg style="left:1315px;top:663px" width="11" height="6"><path d="M0.5 5.5L5.5 0.5L10.5 5.5" fill="none" stroke="#fff" stroke-width="1.1"/></svg>
<div class="a" style="left:1358px;top:188px;width:35px;height:254px;background:#fff;box-shadow:-2px 2px 6px rgba(0,0,0,0.08)"></div>
<div class="a" style="left:1358px;top:224px;width:35px;height:1px;background:#e2e2e2"></div>
<div class="a" style="left:1358px;top:406px;width:35px;height:36px;background:#03d1b1"></div>
<svg style="left:1368px;top:196px" width="16" height="16" viewBox="0 0 16 16"><g fill="none" stroke="#555" stroke-width="1.1" stroke-linejoin="round"><path d="M14.5 10.5V3A2.2 2.2 0 0 0 12.3 .8H3A2.2 2.2 0 0 0 .8 3V13A2.2 2.2 0 0 0 3 15.2H10L14.5 10.5Z"/><path d="M4.5 5H11.5M4.5 7.5H11.5M4.5 10H8.5"/><path d="M10 15.2V12.8A2 2 0 0 1 12 10.8H14.5" /></g></svg>
<svg style="left:1368px;top:233px" width="16" height="16" viewBox="0 0 16 16"><g fill="none" stroke="#555" stroke-width="1.1" stroke-linecap="round"><path d="M6.2 9.8L10.5 5.5"/><path d="M8.2 3.5L9.6 2.1A3 3 0 0 1 13.9 6.4L10 10.3"/><path d="M7.8 12.5L6.4 13.9A3 3 0 0 1 2.1 9.6L6 5.7"/></g></svg>
<svg style="left:1368px;top:269px" width="16" height="16" viewBox="0 0 16 16"><g fill="none" stroke="#555" stroke-width="1.1"><path d="M9.22 14.89A7 7 0 1 1 14.76 9.81" stroke-linecap="round"/><path d="M4.5 6.3H11.5M4.5 6.3L6.5 4.5M4.5 9.7H11.5M11.5 9.7L9.5 11.5" stroke-linecap="round"/></g></svg>
<svg style="left:1368px;top:305px" width="16" height="16" viewBox="0 0 16 16"><g fill="none" stroke="#555" stroke-width="1.1"><circle cx="8" cy="8" r="7.3"/></g></svg>
<div class="a" style="left:1368px;top:305px;width:16px;text-align:center;font-size:10px;line-height:16px;color:#555">欠</div>
<svg style="left:1369px;top:341px" width="15" height="16" viewBox="0 0 15 16"><g fill="none" stroke="#555" stroke-width="1.1" stroke-linejoin="round"><path d="M2.3 .8H12.7A1.5 1.5 0 0 1 14.2 2.3V5.3A2.7 2.7 0 0 0 14.2 10.7V13.7A1.5 1.5 0 0 1 12.7 15.2H2.3A1.5 1.5 0 0 1 .8 13.7V10.7A2.7 2.7 0 0 0 .8 5.3V2.3A1.5 1.5 0 0 1 2.3 .8Z"/><path d="M4.8 3.5L7.5 7L10.2 3.5M7.5 7V13M4.5 8H10.5M4.5 10.5H10.5"/></g></svg>
<svg style="left:1368px;top:377px" width="16" height="16" viewBox="0 0 16 16"><g fill="none" stroke="#555" stroke-width="1.1"><path d="M8 .9L10.2 5.3L15 6L11.5 9.3L12.4 14.3L8 11.9L3.6 14.3L4.5 9.3L1 6L5.8 5.3Z" stroke-linejoin="round"/></g></svg>
<svg style="left:1368px;top:414px" width="16" height="16" viewBox="0 0 16 16"><g fill="none" stroke="#fff" stroke-width="1.3" stroke-linecap="round"><path d="M.7 7V2A1.3 1.3 0 0 1 2 .7H7.5M9.2 6.8L15.3 .7M10.5 .7H15.3V5.5M6.8 9.2L.7 15.3M.7 10.5V15.3H5.5M15.3 9V14A1.3 1.3 0 0 1 14 15.3H8.5"/></g></svg>

<div class="a" style="left:1393px;top:0;width:1px;height:691px;background:linear-gradient(#2a1d33,#3a2438 50%,#6b3c3c)"></div></div></body></html>
